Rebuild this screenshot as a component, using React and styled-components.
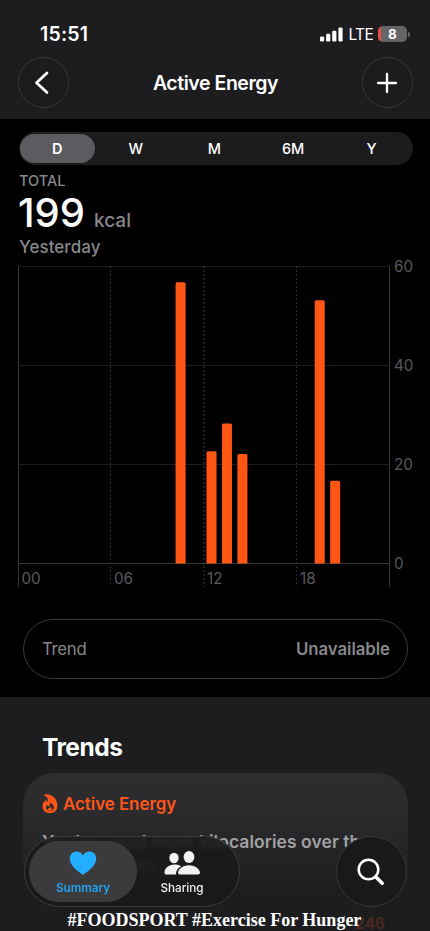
import React, { useState } from "react";
import styled, { createGlobalStyle } from "styled-components";

const GlobalStyle = createGlobalStyle`
  * {
    box-sizing: border-box;
  }
  body {
    margin: 0;
    background: #000;
    font-family: "Inter", "Liberation Sans", sans-serif;
  }
  button {
    border: 0;
    padding: 0;
    background: none;
    color: inherit;
    font-family: inherit;
  }
`;

const ranges = ["D", "W", "M", "6M", "Y"];

const energy = [
  { hour: 10, kcal: 56.8 },
  { hour: 12, kcal: 22.7 },
  { hour: 13, kcal: 28.3 },
  { hour: 14, kcal: 22.1 },
  { hour: 19, kcal: 53.2 },
  { hour: 20, kcal: 16.7 },
];

const Screen = styled.div`
  position: relative;
  display: flex;
  flex-direction: column;
  width: 430px;
  height: 931px;
  overflow: hidden;
  color: #fff;
`;

const Header = styled.header`
  height: 119px;
  flex: none;
  background: #1d1d1f;
`;

const StatusBar = styled.div`
  display: flex;
  align-items: center;
  justify-content: space-between;
  height: 57px;
  padding: 11px 20px 0 40px;
`;

const Time = styled.span`
  font-size: 19.5px;
  font-weight: 600;
  letter-spacing: 0.2px;
`;

const StatusIcons = styled.div`
  display: flex;
  align-items: center;
`;

const Network = styled.span`
  margin: 1px 5px 0 6px;
  font-size: 15.5px;
  letter-spacing: -0.7px;
`;

const Battery = styled.span`
  width: 29px;
  height: 16px;
  border-radius: 5px;
  background: linear-gradient(90deg, #ec4a49 3px, #656567 3px);
  font-size: 13.5px;
  font-weight: 700;
  line-height: 16px;
  text-align: center;
`;

const BatteryCap = styled.span`
  width: 2px;
  height: 5px;
  margin-left: 1px;
  border-radius: 0 2px 2px 0;
  background: #656567;
`;

const NavBar = styled.div`
  display: flex;
  align-items: center;
  justify-content: space-between;
  height: 51px;
  padding: 0 17px 0 18px;
`;

const RoundButton = styled.button`
  display: flex;
  align-items: center;
  justify-content: center;
  width: ${(p) => p.$size}px;
  height: ${(p) => p.$size}px;
  padding: 0 1px 0 0;
  border: 1px solid #38383a;
  border-radius: 50%;
  background: ${(p) => p.$fill || "#1c1c1e"};
`;

const Title = styled.h1`
  margin: 0;
  font-size: 19.5px;
  font-weight: 600;
  letter-spacing: -0.45px;
`;

const Segments = styled.div`
  display: flex;
  flex: none;
  width: 394px;
  height: 33px;
  margin: 13px 0 0 18.5px;
  padding: 2px 0 2px 1px;
  border-radius: 17px;
  background: #1c1c1f;
`;

const Segment = styled.button`
  flex: 1;
  margin: 0 3.5px 0 0.5px;
  border-radius: 15px;
  background: ${(p) => (p.$active ? "#5b5b60" : "none")};
  font-size: 14.5px;
  font-weight: ${(p) => (p.$active ? 600 : 500)};
`;

const Summary = styled.section`
  display: flex;
  flex-direction: column;
  height: 101px;
  flex: none;
  padding: 7px 19px 0;
  color: #87878c;
`;

const TotalLabel = styled.span`
  font-size: 14.5px;
  font-weight: 500;
  line-height: 18px;
`;

const TotalRow = styled.div`
  display: flex;
  align-items: baseline;
  height: 46px;
  line-height: 46px;
`;

const TotalValue = styled.strong`
  margin-left: -1px;
  color: #fff;
  font-size: 40px;
  font-weight: 450;
  letter-spacing: 0;
`;

const TotalUnit = styled.span`
  margin-left: 9px;
  font-size: 19px;
  font-weight: 500;
`;

const TotalDate = styled.span`
  font-size: 17px;
  font-weight: 500;
  line-height: 22px;
  letter-spacing: 0.05px;
`;

const Chart = styled.svg`
  display: block;
  flex: none;
  width: 430px;
  height: 330px;
  overflow: visible;
  fill: #59595c;
  font-size: 15.2px;
  font-weight: 400;
`;

const TrendRow = styled.div`
  display: flex;
  flex: none;
  align-items: center;
  justify-content: space-between;
  height: 60px;
  margin: 23px 22px 0 23px;
  padding: 0 17px 0 18px;
  border: 1px solid #3a3a3c;
  border-radius: 30px;
  color: #87878b;
  font-size: 16.8px;
  letter-spacing: -0.3px;
`;

const TrendState = styled.span`
  font-weight: 600;
  letter-spacing: -0.05px;
`;

const Trends = styled.section`
  flex: 1;
  margin-top: 18px;
  padding: 35px 22px 0 23px;
  background: #1d1d1f;
`;

const SectionTitle = styled.h2`
  margin: 0 0 11px 19px;
  font-size: 24.5px;
  font-weight: 700;
  line-height: 30px;
  letter-spacing: -0.5px;
`;

const Card = styled.article`
  height: 180px;
  padding: 20px 18px 0 19px;
  border-radius: 31px;
  background: linear-gradient(#2d2d2f 0, #2b2b2d 40px, #1e1e20 110px, #1c1c1e);
`;

const CardTitle = styled.div`
  display: flex;
  align-items: center;
  gap: 5px;
  height: 21px;
  color: #ff5518;
  font-size: 17px;
  font-weight: 600;
  letter-spacing: -0.08px;
`;

const CardText = styled.p`
  margin: 16px 0 0;
  color: #a1a1a3;
  font-size: 17.5px;
  font-weight: 600;
  line-height: 24px;
  letter-spacing: 0.05px;
  white-space: nowrap;
`;

const CardTextFaded = styled.span`
  color: #6b6b6d;
`;

const CardValue = styled.div`
  padding: 36px 5px 0 0;
  color: #4a2820;
  font-size: 15.5px;
  font-weight: 700;
  line-height: 19px;
  text-align: right;
`;

const BottomBar = styled.nav`
  position: absolute;
  right: 23px;
  bottom: 24px;
  left: 24px;
  display: flex;
  justify-content: space-between;
`;

const Tabs = styled.div`
  display: flex;
  width: 216px;
  height: 71px;
  padding: 4px;
  border: 1px solid #3d3d3f;
  border-radius: 36px;
  background: rgba(25, 25, 27, 0.88);
  backdrop-filter: blur(2px);
`;

const Tab = styled.button`
  display: flex;
  flex-direction: column;
  align-items: center;
  width: ${(p) => (p.$active ? 108 : 90)}px;
  height: 61px;
  padding-top: 9px;
  border-radius: 31px;
  background: ${(p) => (p.$active ? "rgba(61, 61, 63, 0.96)" : "none")};
  color: ${(p) => (p.$active ? "#23a3f4" : "#f0f0f2")};
  font-size: 11.7px;
  font-weight: ${(p) => (p.$active ? 600 : 500)};
  line-height: 15px;
  svg {
    margin-bottom: 5px;
  }
`;

const Caption = styled.div`
  position: absolute;
  bottom: 0;
  left: 67.5px;
  font-family: "Liberation Serif", serif;
  font-size: 18px;
  font-weight: 700;
  line-height: 21px;
  white-space: nowrap;
`;

function EnergyChart() {
  const left = 18.5;
  const base = 297.5;
  const hourWidth = 371 / 24;

  return (
    <Chart viewBox="0 0 430 330">
      {[0, 20, 40, 60].map((value) => {
        const y = base - value * 4.95;
        return (
          <g key={value}>
            <line x1={left} x2="389.5" y1={y} y2={y} stroke={value ? "#1e1e20" : "#363638"} />
            <text x="394" y={y + 5.5}>{value}</text>
          </g>
        );
      })}
      {[6, 12, 18].map((hour) => {
        const x = left + Math.floor(hour * hourWidth) + (hour === 12 ? 0.5 : 0);
        return (
          <line key={hour} x1={x} x2={x} y1="0" y2="321" stroke={hour === 12 ? "#3c3c3f" : "#29292b"} strokeDasharray="2 2" />
        );
      })}
      <path d="M18.5 0V321M389.5 0V321" stroke="#363638" />
      {["00", "06", "12", "18"].map((label, i) => (
        <text key={label} x={[21.5, 114, 207, 300][i]} y="318">
          {label}
        </text>
      ))}
      {energy.map(({ hour, kcal }) => {
        const x = left + hour * hourWidth + 2.5;
        const top = base - kcal * 4.95;
        return (
          <path
            key={hour}
            d={`M${x} ${base}V${top + 1.5}q0-1.5 1.5-1.5h7q1.5 0 1.5 1.5V${base}z`}
            fill="#ff5614"
          />
        );
      })}
    </Chart>
  );
}

export default function App() {
  const [range, setRange] = useState("D");
  const [tab, setTab] = useState("Summary");

  return (
    <Screen>
      <GlobalStyle />
      <Header>
        <StatusBar>
          <Time>15:51</Time>
          <StatusIcons>
            <svg width="23" height="15" viewBox="0 0 23 15" fill="#fff">
              <rect x="0" y="9.5" width="4.2" height="5" rx="1.3" />
              <rect x="6.1" y="6.7" width="4.2" height="7.8" rx="1.3" />
              <rect x="12.2" y="3.7" width="4.2" height="10.8" rx="1.3" />
              <rect x="18.4" y="0.5" width="4.2" height="14" rx="1.3" />
            </svg>
            <Network>LTE</Network>
            <Battery>8</Battery>
            <BatteryCap />
          </StatusIcons>
        </StatusBar>
        <NavBar>
          <RoundButton $size={51}>
            <svg width="24" height="24" viewBox="0 0 24 24" fill="none" stroke="#fff" strokeWidth="2.7" strokeLinecap="round" strokeLinejoin="round">
              <path d="M16 2 5.500 11.800 16 21.600" />
            </svg>
          </RoundButton>
          <Title>Active Energy</Title>
          <RoundButton $size={51}>
            <svg width="22" height="22" viewBox="0 0 22 22" fill="none" stroke="#fff" strokeWidth="2.3" strokeLinecap="round">
              <path d="M11 2v18M2 11h18" />
            </svg>
          </RoundButton>
        </NavBar>
      </Header>

      <Segments>
        {ranges.map((name) => (
          <Segment key={name} $active={name === range} onClick={() => setRange(name)}>
            {name}
          </Segment>
        ))}
      </Segments>

      <Summary>
        <TotalLabel>TOTAL</TotalLabel>
        <TotalRow>
          <TotalValue>199</TotalValue>
          <TotalUnit>kcal</TotalUnit>
        </TotalRow>
        <TotalDate>Yesterday</TotalDate>
      </Summary>

      <EnergyChart />

      <TrendRow>
        <span>Trend</span>
        <TrendState>Unavailable</TrendState>
      </TrendRow>

      <Trends>
        <SectionTitle>Trends</SectionTitle>
        <Card>
          <CardTitle>
            <svg width="16" height="20" viewBox="0 0 16 20">
              <path fill="#ff5518" d="M2.800.3C9.500-.2 15.400 4.500 15.400 11.500c0 4.800-3.100 7.700-7.600 7.700S.6 16.300.6 12.300c0-2.700 1.100-4.700 2.700-5.800.5-.4 1.100-.1 1.300.5l.4 1.200C6.600 6.200 5.800 3 2.700 1.700 2 1.400 2.100.4 2.800.3z" />
              <path fill="#2c2c2e" d="M8 8.500c2.500 1.100 3.900 3.200 3.900 5.100 0 2.100-1.700 3.400-3.900 3.400s-4-1.200-4-3.200c0-1.300.6-2.200 1.400-2.800.4.900.9 1.300 1.500 1.500C7.800 11.500 8.100 10 8 8.500z" />
              <path fill="#ff5518" d="M8.200 12.400c1.100.8 1.700 1.500 1.700 2.400 0 1.400-.9 2.200-2 2.200s-2.100-.8-2.100-1.900c0-.5.2-.9.500-1.200.3.400.6.500.9.500.7-.4 1-1 1-2z" />
            </svg>
            Active Energy
          </CardTitle>
          <CardText>
            You’ve used more kilocalories over the
            <br />
            <CardTextFaded>last 12 weeks</CardTextFaded>
          </CardText>
          <CardValue>246</CardValue>
        </Card>
      </Trends>

      <BottomBar>
        <Tabs>
          <Tab $active={tab === "Summary"} onClick={() => setTab("Summary")}>
            <svg width="28" height="26" viewBox="0 0 28 26" fill="#24aeff">
              <path d="M14 25C7 20 .8 15 .8 8.600.8 4.500 3.600 1.500 7.400 1.500c2.900 0 5.300 1.500 6.600 4 1.300-2.500 3.700-4 6.600-4 3.800 0 6.600 3 6.600 7.100C27.200 15 21 20 14 25z" />
            </svg>
            Summary
          </Tab>
          <Tab $active={tab === "Sharing"} onClick={() => setTab("Sharing")}>
            <svg width="38" height="26" viewBox="0 0 38 26" fill="#f2f2f4">
              <ellipse cx="11" cy="8" rx="4.700" ry="5.200" />
              <ellipse cx="26" cy="7" rx="5.400" ry="5.900" />
              <path d="M18.200 16.200c-1.800-1.100-4.200-1.700-6.800-1.700C5.500 14.500 1.500 18.500 1.500 22.500c0 1.500.6 2 2 2h9.700c-.7-3 1.700-6.700 5-8.300z" />
              <path d="M26 15.200c6.500 0 11 4.200 11 7.600 0 1.200-.8 1.700-2.200 1.700H17.200c-1.400 0-2.200-.5-2.200-1.700 0-3.400 4.500-7.600 11-7.600z" />
            </svg>
            Sharing
          </Tab>
        </Tabs>
        <RoundButton $size={71} $fill="#19191b">
          <svg width="30" height="30" viewBox="0 0 30 30" fill="none" stroke="#fff" strokeWidth="2.500" strokeLinecap="round">
            <circle cx="12.500" cy="12.500" r="9.800" />
            <path d="m20.200 20.200 6 6" strokeWidth="3.500" />
          </svg>
        </RoundButton>
      </BottomBar>
      <Caption>#FOODSPORT #Exercise For Hunger</Caption>
    </Screen>
  );
}
